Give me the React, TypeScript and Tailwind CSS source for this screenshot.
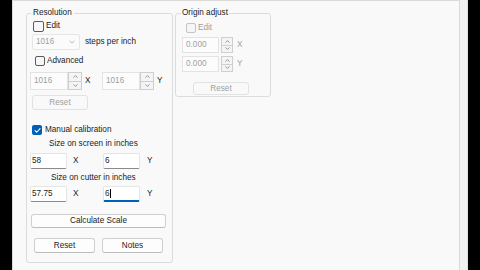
import React from "react";

function Check({ size = 10, checked = false, disabled = false }: { size?: number; checked?: boolean; disabled?: boolean }) {
  if (checked) {
    return (
      <div className="flex items-center justify-center rounded-[2px] bg-[#005fb8] shrink-0" style={{ width: size, height: size }}>
        <svg width={size - 3} height={size - 3} viewBox="0 0 8 8">
          <path d="M1.2 4.2 L3.1 6 L6.9 1.9" fill="none" stroke="#ffffff" strokeWidth="1.2" strokeLinecap="round" strokeLinejoin="round" />
        </svg>
      </div>
    );
  }
  return (
    <div
      className={
        "rounded-[2px] border shrink-0 " +
        (disabled ? "border-[#c4c4c4] bg-[#f6f6f6]" : "border-[#5a5a5a] bg-[#f7f7f7]")
      }
      style={{ width: size, height: size }}
    />
  );
}

function Spinner({ w, h }: { w: number; h: number }) {
  return (
    <div className="flex flex-col shrink-0" style={{ width: w, height: h }}>
      <div className="flex-1 flex items-center justify-center border border-[#cfcfcf] bg-[#f4f4f4]">
        <svg width="5" height="3" viewBox="0 0 5 3">
          <path d="M0.5 2.6 L2.5 0.6 L4.5 2.6" fill="none" stroke="#8c8c8c" strokeWidth="0.9" />
        </svg>
      </div>
      <div className="flex-1 flex items-center justify-center border border-t-0 border-[#cfcfcf] bg-[#f4f4f4]">
        <svg width="5" height="3" viewBox="0 0 5 3">
          <path d="M0.5 0.4 L2.5 2.4 L4.5 0.4" fill="none" stroke="#8c8c8c" strokeWidth="0.9" />
        </svg>
      </div>
    </div>
  );
}

function DisabledBox({ text, w, h }: { text: string; w: number; h: number }) {
  return (
    <div
      className="flex items-center pl-[3px] border border-[#e3e3e3] bg-[#fcfcfc] text-[#9f9f9f] shrink-0"
      style={{ width: w, height: h }}
    >
      {text}
    </div>
  );
}

function TextBox({ text, focused = false }: { text: string; focused?: boolean }) {
  return (
    <div
      className={
        "flex items-center w-[37px] h-[16px] pl-[1px] bg-white border border-[#e5e5e5] rounded-[2px] shrink-0 " +
        (focused ? "border-b-2 border-b-[#005fb8]" : "border-b-[#8a8a8a]")
      }
    >
      <span>{text}</span>
      {focused && <span className="w-[1px] h-[9px] bg-black" />}
    </div>
  );
}

function Button({ label, w, h, disabled = false }: { label: string; w: number; h: number; disabled?: boolean }) {
  return (
    <div
      className={
        "flex items-center justify-center rounded-[3px] border shrink-0 " +
        (disabled
          ? "border-[#e2e2e2] bg-[#f9f9f9] text-[#a0a0a0]"
          : "border-[#d0d0d0] border-b-[#bcbcbc] bg-[#fdfdfd] text-[#1b1b1b]")
      }
      style={{ width: w, height: h }}
    >
      {label}
    </div>
  );
}

export default function App() {
  return (
    <div className="w-[480px] h-[270px] flex overflow-hidden bg-[#f9f9f9] text-[8.2px] leading-[12px] text-[#1b1b1b] [font-family:'Liberation_Sans',Arial,sans-serif]">
      <div className="w-[12px] bg-black shrink-0" />
      <div className="flex-1 flex items-start bg-[#f9f9f9] border-l border-t border-r border-[#dadada] pt-[6px] pl-[13px]">
        {/* Resolution */}
        <fieldset className="w-[147px] border border-[#dcdcdc] rounded-[3px] pl-[3px] pr-[3px] pb-[9px]">
          <legend className="ml-[1px] px-[2px] leading-[12px]">Resolution</legend>

          <div className="flex items-center h-[12px] mt-[1px] ml-[3px] gap-[2px]">
            <Check size={11} />
            <span>Edit</span>
          </div>

          <div className="flex items-center h-[16px] mt-[2px] ml-[2px]">
            <div className="flex items-center justify-between w-[48px] h-[16px] pl-[3px] pr-[4px] border border-[#e6e6e6] bg-[#fbfbfb] text-[#9f9f9f] rounded-[2px]">
              <span>1016</span>
              <svg width="6" height="4" viewBox="0 0 6 4">
                <path d="M0.5 0.6 L3 3.2 L5.5 0.6" fill="none" stroke="#a8a8a8" strokeWidth="0.8" />
              </svg>
            </div>
            <span className="ml-[5px]">steps per inch</span>
          </div>

          <div className="flex items-center h-[10px] mt-[6px] ml-[5px] gap-[2px]">
            <Check size={10} />
            <span>Advanced</span>
          </div>

          <div className="flex items-center h-[18px] mt-[6px]">
            <DisabledBox text="1016" w={38} h={18} />
            <Spinner w={14} h={18} />
            <span className="w-[20px] pl-[3px]">X</span>
            <DisabledBox text="1016" w={38} h={18} />
            <Spinner w={14} h={18} />
            <span className="pl-[3px]">Y</span>
          </div>

          <div className="flex mt-[5px] ml-[2px]">
            <Button label="Reset" w={56} h={15} disabled />
          </div>

          <div className="flex items-center h-[10px] mt-[15px] ml-[2px] gap-[3px]">
            <Check size={10} checked />
            <span>Manual calibration</span>
          </div>

          <div className="h-[12px] mt-[3px] ml-[19px]">Size on screen in inches</div>

          <div className="flex items-center h-[16px] mt-[3px]">
            <TextBox text="58" />
            <span className="w-[36px] pl-[6px]">X</span>
            <TextBox text="6" />
            <span className="pl-[7px]">Y</span>
          </div>

          <div className="h-[12px] mt-[3px] ml-[21px]">Size on cutter in inches</div>

          <div className="flex items-center h-[16px] mt-[2px]">
            <TextBox text="57.75" />
            <span className="w-[36px] pl-[6px]">X</span>
            <TextBox text="6" focused />
            <span className="pl-[7px]">Y</span>
          </div>

          <div className="flex mt-[12px] ml-[1px]">
            <Button label="Calculate Scale" w={135} h={14} />
          </div>

          <div className="flex mt-[10px] ml-[4px] gap-[7px]">
            <Button label="Reset" w={61} h={15} />
            <Button label="Notes" w={61} h={15} />
          </div>
        </fieldset>

        {/* Origin adjust */}
        <fieldset className="w-[96px] ml-[2px] border border-[#dcdcdc] rounded-[3px] pl-[6px] pr-[3px] pb-[1px]">
          <legend className="ml-[-1px] px-[1px] leading-[12px]">Origin adjust</legend>

          <div className="flex items-center h-[10px] mt-[4px] ml-[4px] gap-[2px] text-[#a0a0a0]">
            <Check size={10} disabled />
            <span>Edit</span>
          </div>

          <div className="flex items-center h-[16px] mt-[4px] text-[#a0a0a0]">
            <DisabledBox text="0.000" w={37} h={16} />
            <div className="ml-[2px]">
              <Spinner w={12} h={16} />
            </div>
            <span className="ml-[4px]">X</span>
          </div>

          <div className="flex items-center h-[16px] mt-[3px] text-[#a0a0a0]">
            <DisabledBox text="0.000" w={37} h={16} />
            <div className="ml-[2px]">
              <Spinner w={12} h={16} />
            </div>
            <span className="ml-[4px]">Y</span>
          </div>

          <div className="flex mt-[10px] ml-[11px]">
            <Button label="Reset" w={56} h={13} disabled />
          </div>
        </fieldset>
      </div>
      <div className="w-[8px] shrink-0 bg-[#f1f1f1] border-r border-[#e0e0e0]" />
      <div className="w-[12px] bg-black shrink-0" />
    </div>
  );
}
